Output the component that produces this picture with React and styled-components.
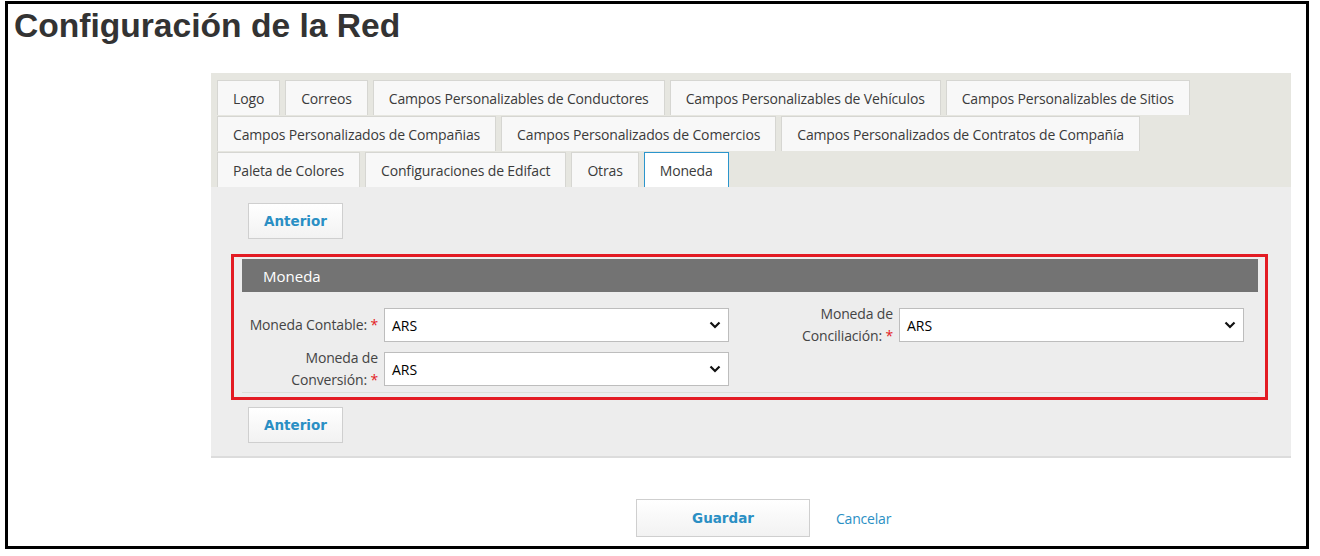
import React from 'react';
import styled, { createGlobalStyle } from 'styled-components';

const blue = '#2a8fc4';
const red = '#e31b23';
const text = '#3b3b3b';

const GlobalStyle = createGlobalStyle`
  body {
    margin: 0;
    background: #fff;
    font-family: "Open Sans", "Noto Sans", sans-serif;
    color: ${text};
  }
`;

const Frame = styled.div`
  box-sizing: border-box;
  width: 1304px;
  height: 548px;
  margin: 1px 0 0 5px;
  border: 3px solid #000;
`;

const Title = styled.h1`
  margin: 0;
  padding: 3px 0 0 6px;
  font-family: "Liberation Sans", Arial, sans-serif;
  font-size: 33.6px;
  line-height: 37px;
  font-weight: bold;
  color: #333;
`;

const Panel = styled.div`
  width: 1080px;
  margin: 29px 0 0 203px;
  background: #ededed;
  border-bottom: 2px solid #dcdcdc;
`;

const TabBar = styled.div`
  display: flex;
  flex-wrap: wrap;
  column-gap: 5px;
  row-gap: 1px;
  padding: 7px 6px 0;
  background: #e6e6e0;
`;

const Tab = styled.div`
  box-sizing: border-box;
  height: 35px;
  padding: 0 15px;
  display: flex;
  align-items: center;
  font-size: 14px;
  letter-spacing: -0.15px;
  color: ${text};
  background: ${({ active }) => (active ? '#fff' : '#f8f8f8')};
  border: 1px solid ${({ active }) => (active ? '#2b95cc' : '#d6d6d2')};
  border-bottom: none;
`;

const Content = styled.div`
  padding: 16px 0 13px 20px;
`;

const Button = styled.button`
  display: block;
  box-sizing: border-box;
  width: ${({ wide }) => (wide ? '174px' : '95px')};
  height: ${({ wide }) => (wide ? '38px' : '36px')};
  margin: 0 0 0 ${({ wide }) => (wide ? '0' : '17px')};
  padding: 0;
  border: 1px solid #cfcfcf;
  background: linear-gradient(#fff, #f2f2f2);
  font-family: "DejaVu Sans", Verdana, sans-serif;
  font-size: 13.5px;
  font-weight: bold;
  color: ${blue};
  cursor: pointer;
`;

const Highlight = styled.div`
  box-sizing: border-box;
  width: 1037px;
  margin: 15px 0 7px;
  padding: 2px 7px 4px 8px;
  border: 3px solid ${red};
`;

const Section = styled.div`
  border-bottom: 1px solid #deded8;
  padding-bottom: 1px;
`;

const SectionHeader = styled.div`
  height: 33px;
  padding-left: 21px;
  display: flex;
  align-items: center;
  background: #737373;
  color: #fff;
  font-size: 15px;
`;

const FormGrid = styled.div`
  display: grid;
  grid-template-columns: 136px 345px 158px 345px;
  grid-auto-rows: 44px;
  column-gap: 6px;
  padding-top: 11px;
  align-items: center;
`;

const Label = styled.label`
  justify-self: end;
  max-width: 132px;
  text-align: right;
  font-size: 14px;
  line-height: 22px;
  letter-spacing: -0.15px;
  color: #444;

  &::after {
    content: '\\00a0*';
    color: ${red};
  }
`;

const SelectBox = styled.div`
  box-sizing: border-box;
  height: 34px;
  display: flex;
  align-items: center;
  justify-content: space-between;
  padding: 0 7px;
  background: #fff;
  border: 1px solid #bdbdbd;
  font-size: 14px;
  color: #000;
`;

const Footer = styled.div`
  display: flex;
  align-items: center;
  gap: 26px;
  margin: 41px 0 0 628px;
`;

const Link = styled.a`
  font-size: 14px;
  color: ${blue};
  letter-spacing: -0.2px;
  cursor: pointer;
`;

const Chevron = () => (
  <svg width="12" height="8" viewBox="0 0 12 8">
    <path d="M1.5 1.5l4.5 4.5 4.5-4.5" fill="none" stroke="#111" strokeWidth="2.2" />
  </svg>
);

const Select = ({ value }) => (
  <SelectBox>
    <span>{value}</span>
    <Chevron />
  </SelectBox>
);

const tabs = [
  'Logo',
  'Correos',
  'Campos Personalizables de Conductores',
  'Campos Personalizables de Vehículos',
  'Campos Personalizables de Sitios',
  'Campos Personalizados de Compañias',
  'Campos Personalizados de Comercios',
  'Campos Personalizados de Contratos de Compañía',
  'Paleta de Colores',
  'Configuraciones de Edifact',
  'Otras',
  'Moneda',
];

const App = () => (
  <>
    <GlobalStyle />
    <Frame>
      <Title>Configuración de la Red</Title>
      <Panel>
        <TabBar>
          {tabs.map(t => (
            <Tab key={t} active={t === 'Moneda'}>{t}</Tab>
          ))}
        </TabBar>
        <Content>
          <Button>Anterior</Button>
          <Highlight>
            <Section>
              <SectionHeader>Moneda</SectionHeader>
              <FormGrid>
                <Label>Moneda Contable:</Label>
                <Select value="ARS" />
                <Label>Moneda de Conciliación:</Label>
                <Select value="ARS" />
                <Label>Moneda de Conversión:</Label>
                <Select value="ARS" />
              </FormGrid>
            </Section>
          </Highlight>
          <Button>Anterior</Button>
        </Content>
      </Panel>
      <Footer>
        <Button wide>Guardar</Button>
        <Link>Cancelar</Link>
      </Footer>
    </Frame>
  </>
);

export default App;
